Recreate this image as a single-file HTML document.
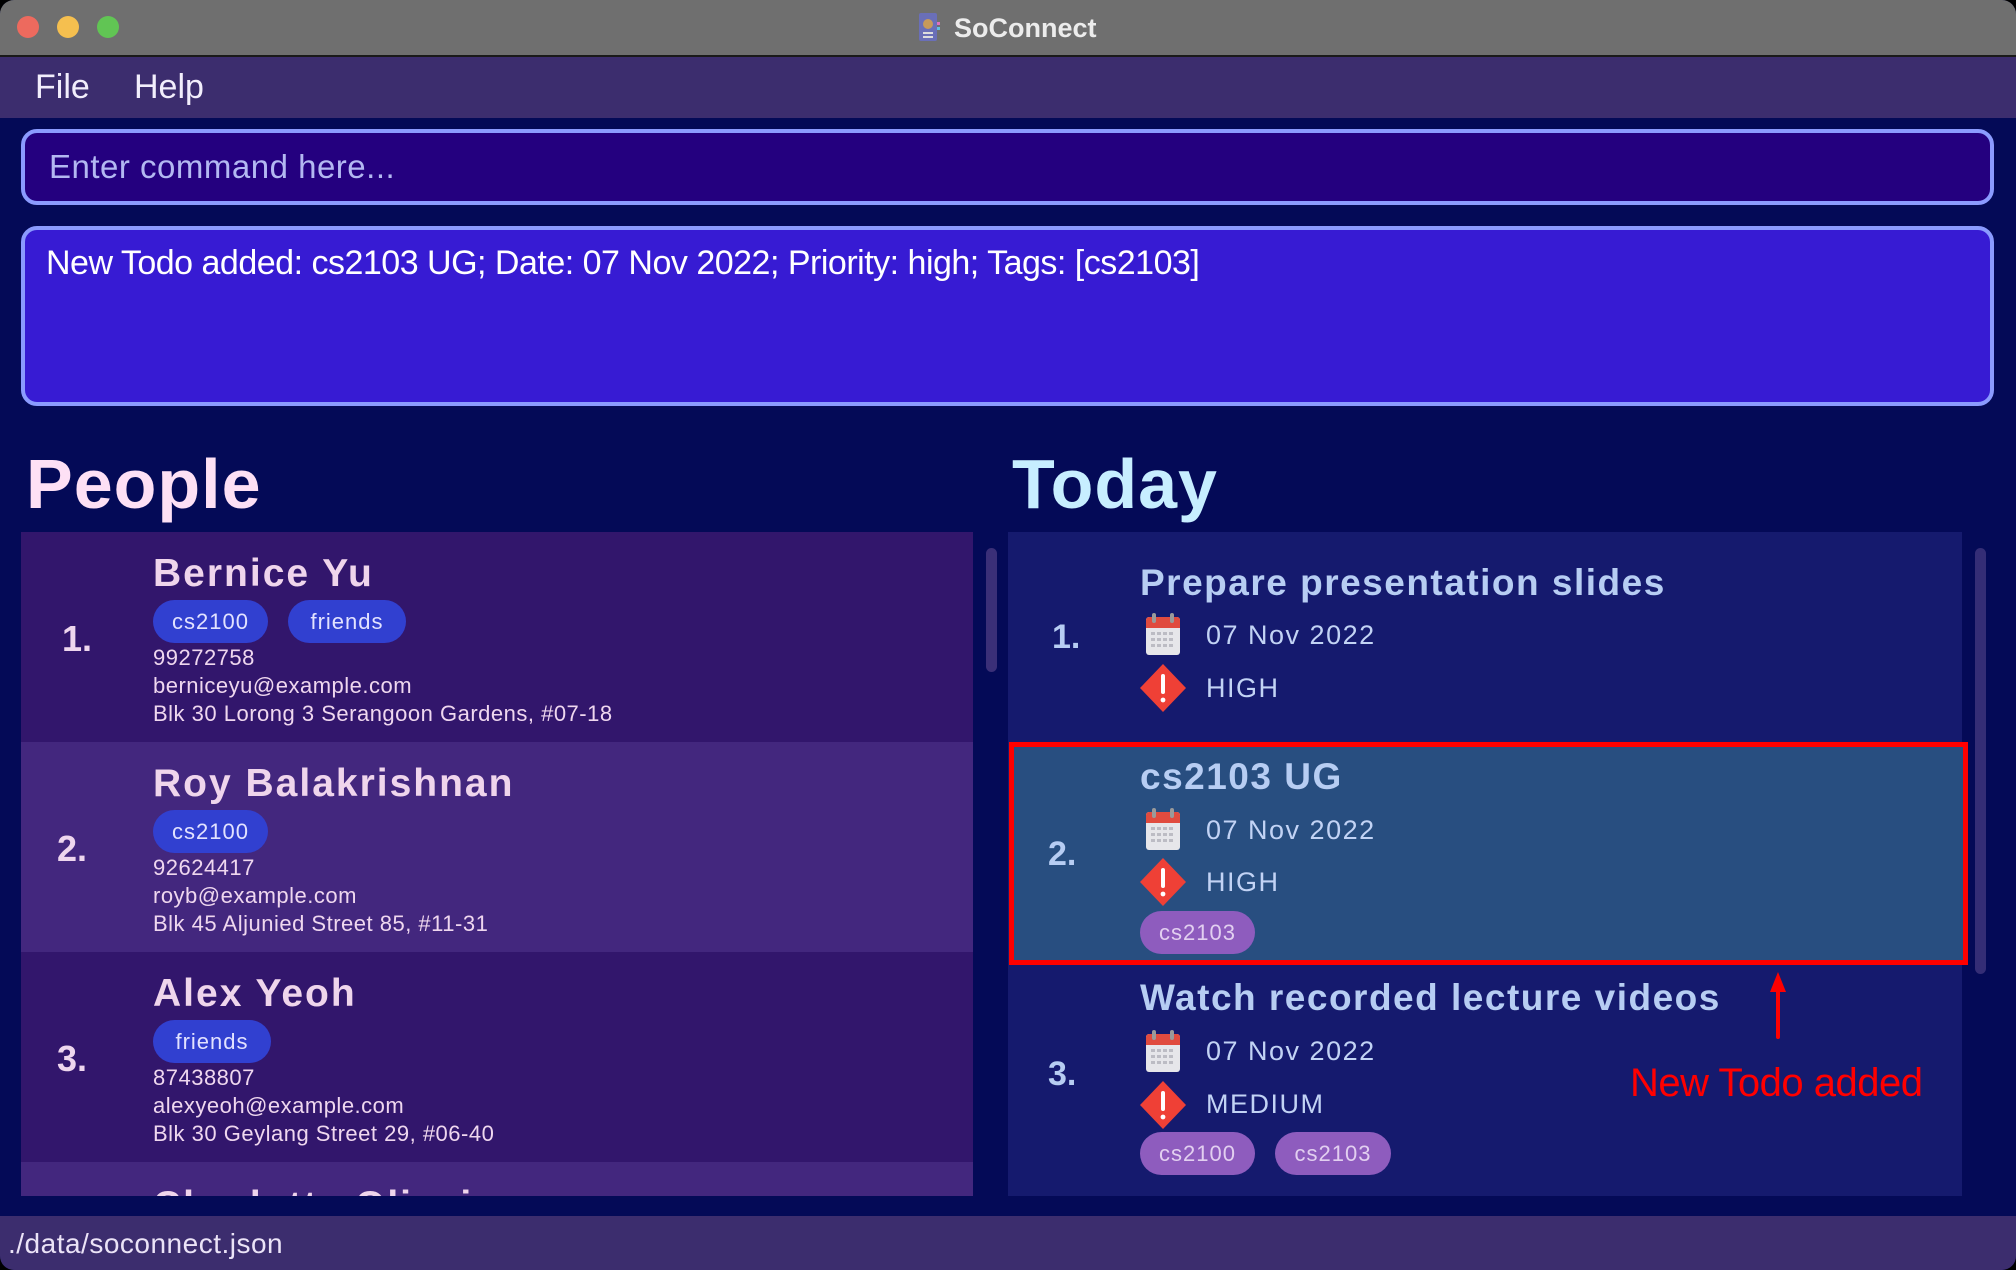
<!DOCTYPE html>
<html><head><meta charset="utf-8">
<style>
*{margin:0;padding:0;box-sizing:border-box}
html,body{width:2016px;height:1270px;overflow:hidden;background:#000}
body{font-family:"Liberation Sans",sans-serif;position:relative}
.win{position:absolute;left:0;top:0;width:2016px;height:1270px;background:#040a57;border-radius:14px;overflow:hidden}
.a{position:absolute;white-space:nowrap}
.tb{left:0;top:0;width:2016px;height:57px;background:#6f6f6f;border-bottom:2px solid #1a1a1a}
.dot{position:absolute;top:16px;width:22px;height:22px;border-radius:50%}
.menu{left:0;top:57px;width:2016px;height:61px;background:#3c2d6e}
.mi{font-size:34px;color:#f2eefc;top:65px;line-height:44px}
.cmd{left:21px;top:129px;width:1973px;height:76px;background:#24007f;border:4px solid #8b9bff;border-radius:16px}
.res{left:21px;top:226px;width:1973px;height:180px;background:#371bd3;border:4px solid #8b9bff;border-radius:16px}
.h{font-size:70px;font-weight:bold;letter-spacing:1px}
.card{position:absolute;left:21px;width:952px;height:210px}
.num{font-size:36px;font-weight:bold;color:#eed6ee}
.name{font-size:39px;font-weight:bold;color:#efd5ec;letter-spacing:2px}
.tag{position:absolute;height:43px;line-height:43px;border-radius:22px;background:#3140d0;color:#e2e2ff;font-size:22px;text-align:center;letter-spacing:1px}
.info{font-size:22px;color:#efd7ef;letter-spacing:0.5px}
.tn{font-size:37px;font-weight:bold;color:#b7cdf3;letter-spacing:1.5px}
.tx{font-size:27px;color:#c2d3f5;letter-spacing:1.5px}
.tnum{font-size:34px;font-weight:bold;color:#b7cdf3}
.ptag{position:absolute;height:43px;line-height:43px;border-radius:22px;background:#8e5cbe;color:#e2cff0;font-size:22px;text-align:center;letter-spacing:1px}
</style></head><body>
<div class="win">
 <div class="a tb"></div>
 <div class="dot" style="left:17px;background:#ed6a5e"></div>
 <div class="dot" style="left:57px;background:#f5bf4f"></div>
 <div class="dot" style="left:97px;background:#61c554"></div>
 <svg class="a" style="left:918px;top:12px" width="22" height="30" viewBox="0 0 22 30"><rect x="1" y="1" width="18" height="28" rx="2" fill="#6a6fb8"/><circle cx="10" cy="12" r="5" fill="#c79a5a"/><rect x="5" y="20" width="10" height="2" fill="#ddd"/><rect x="5" y="24" width="10" height="2" fill="#ddd"/><rect x="19" y="10" width="3" height="3" fill="#e070c0"/><rect x="19" y="15" width="3" height="3" fill="#60c0e0"/></svg>
 <div class="a" style="left:954px;top:10px;font-size:27px;font-weight:bold;color:#ececec;line-height:36px">SoConnect</div>
 <div class="a menu"></div>
 <div class="a mi" style="left:35px">File</div>
 <div class="a mi" style="left:134px">Help</div>
 <div class="a cmd"></div>
 <div class="a" style="left:49px;top:146px;font-size:33px;color:#b3b8f2;line-height:42px;letter-spacing:0.5px">Enter command here...</div>
 <div class="a res"></div>
 <div class="a" style="left:46px;top:242px;font-size:34px;color:#fff;line-height:42px;letter-spacing:-0.5px">New Todo added: cs2103 UG; Date: 07 Nov 2022; Priority: high; Tags: [cs2103]</div>

 <div class="a h" style="left:26px;top:444px;color:#fde0f5;line-height:80px">People</div>
 <div class="a h" style="left:1012px;top:444px;color:#c7eeff;line-height:80px">Today</div>

 <div class="a" style="left:21px;top:532px;width:952px;height:664px;overflow:hidden">
  <div class="card" style="left:0;top:0;background:#32166c">
   <div class="a num" style="left:41px;top:86px">1.</div>
   <div class="a name" style="left:132px;top:20px">Bernice Yu</div>
   <div class="tag" style="left:132px;top:68px;width:115px">cs2100</div>
   <div class="tag" style="left:267px;top:68px;width:118px">friends</div>
   <div class="a info" style="left:132px;top:113px">99272758</div>
   <div class="a info" style="left:132px;top:141px">berniceyu@example.com</div>
   <div class="a info" style="left:132px;top:169px">Blk 30 Lorong 3 Serangoon Gardens, #07-18</div>
  </div>
  <div class="card" style="left:0;top:210px;background:#43277e">
   <div class="a num" style="left:36px;top:86px">2.</div>
   <div class="a name" style="left:132px;top:20px">Roy Balakrishnan</div>
   <div class="tag" style="left:132px;top:68px;width:115px">cs2100</div>
   <div class="a info" style="left:132px;top:113px">92624417</div>
   <div class="a info" style="left:132px;top:141px">royb@example.com</div>
   <div class="a info" style="left:132px;top:169px">Blk 45 Aljunied Street 85, #11-31</div>
  </div>
  <div class="card" style="left:0;top:420px;background:#32166c">
   <div class="a num" style="left:36px;top:86px">3.</div>
   <div class="a name" style="left:132px;top:20px">Alex Yeoh</div>
   <div class="tag" style="left:132px;top:68px;width:118px">friends</div>
   <div class="a info" style="left:132px;top:113px">87438807</div>
   <div class="a info" style="left:132px;top:141px">alexyeoh@example.com</div>
   <div class="a info" style="left:132px;top:169px">Blk 30 Geylang Street 29, #06-40</div>
  </div>
  <div class="card" style="left:0;top:630px;background:#43277e;overflow:hidden;height:34px">
   <div class="a name" style="left:132px;top:22px">Charlotte Oliveiro</div>
  </div>
 </div>
 <div class="a" style="left:986px;top:548px;width:11px;height:124px;border-radius:6px;background:#3a2f78"></div>

 <div class="a" style="left:1008px;top:532px;width:954px;height:664px;background:#151a6e;overflow:hidden"></div>
 <div class="a" style="left:1975px;top:548px;width:11px;height:426px;border-radius:6px;background:#342d76"></div>

 <svg width="0" height="0" style="position:absolute;left:0;top:0"><defs>
  <g id="cal"><rect x="0" y="4" width="34" height="38" rx="3" fill="#e6e6ea"/><rect x="0" y="4" width="34" height="11" rx="3" fill="#e04b3f"/><rect x="0" y="11" width="34" height="4" fill="#e04b3f"/><rect x="6" y="0" width="4" height="10" rx="2" fill="#9a9a9a"/><rect x="24" y="0" width="4" height="10" rx="2" fill="#9a9a9a"/>
   <g fill="#bcbcc4"><rect x="5" y="19" width="4" height="3"/><rect x="11" y="19" width="4" height="3"/><rect x="17" y="19" width="4" height="3"/><rect x="23" y="19" width="4" height="3"/><rect x="5" y="25" width="4" height="3"/><rect x="11" y="25" width="4" height="3"/><rect x="17" y="25" width="4" height="3"/><rect x="23" y="25" width="4" height="3"/><rect x="5" y="31" width="4" height="3"/><rect x="11" y="31" width="4" height="3"/><rect x="17" y="31" width="4" height="3"/><rect x="23" y="31" width="4" height="3"/></g></g>
  <g id="dia"><path d="M23 0 L46 24 L23 48 L0 24 Z" fill="#ef4036"/><rect x="21" y="10" width="4" height="20" rx="2" fill="#fff"/><circle cx="23" cy="36" r="2.4" fill="#fff"/></g>
 </defs></svg>

 <div class="a tnum" style="left:1052px;top:618px">1.</div>
 <div class="a tn" style="left:1140px;top:562px">Prepare presentation slides</div>
 <svg class="a" style="left:1146px;top:613px" width="34" height="42"><use href="#cal"/></svg>
 <div class="a tx" style="left:1206px;top:620px">07 Nov 2022</div>
 <svg class="a" style="left:1140px;top:664px" width="46" height="48"><use href="#dia"/></svg>
 <div class="a tx" style="left:1206px;top:673px">HIGH</div>

 <div class="a" style="left:1009px;top:742px;width:959px;height:223px;background:#284e80;border:5px solid #ff0000"></div>
 <div class="a tnum" style="left:1048px;top:835px">2.</div>
 <div class="a tn" style="left:1140px;top:756px">cs2103 UG</div>
 <svg class="a" style="left:1146px;top:808px" width="34" height="42"><use href="#cal"/></svg>
 <div class="a tx" style="left:1206px;top:815px">07 Nov 2022</div>
 <svg class="a" style="left:1140px;top:858px" width="46" height="48"><use href="#dia"/></svg>
 <div class="a tx" style="left:1206px;top:867px">HIGH</div>
 <div class="ptag" style="left:1140px;top:911px;width:115px">cs2103</div>

 <div class="a tnum" style="left:1048px;top:1055px">3.</div>
 <div class="a tn" style="left:1140px;top:977px">Watch recorded lecture videos</div>
 <svg class="a" style="left:1146px;top:1030px" width="34" height="42"><use href="#cal"/></svg>
 <div class="a tx" style="left:1206px;top:1036px">07 Nov 2022</div>
 <svg class="a" style="left:1140px;top:1081px" width="46" height="48"><use href="#dia"/></svg>
 <div class="a tx" style="left:1206px;top:1089px">MEDIUM</div>
 <div class="ptag" style="left:1140px;top:1132px;width:115px">cs2100</div>
 <div class="ptag" style="left:1275px;top:1132px;width:116px">cs2103</div>

 <svg class="a" style="left:1764px;top:970px" width="30" height="72"><path d="M14 2 L22 22 L6 22 Z" fill="#ff0000"/><rect x="12" y="18" width="4" height="51" rx="2" fill="#ff0000"/></svg>
 <div class="a" style="left:1630px;top:1058px;font-size:40px;color:#ff0000;line-height:50px;letter-spacing:-0.5px">New Todo added</div>

 <div class="a" style="left:0;top:1216px;width:2016px;height:54px;background:#3c2d6e"></div>
 <div class="a" style="left:8px;top:1227px;font-size:28px;color:#ebe3f7;line-height:34px;letter-spacing:0.5px">./data/soconnect.json</div>
</div>
</body></html>
